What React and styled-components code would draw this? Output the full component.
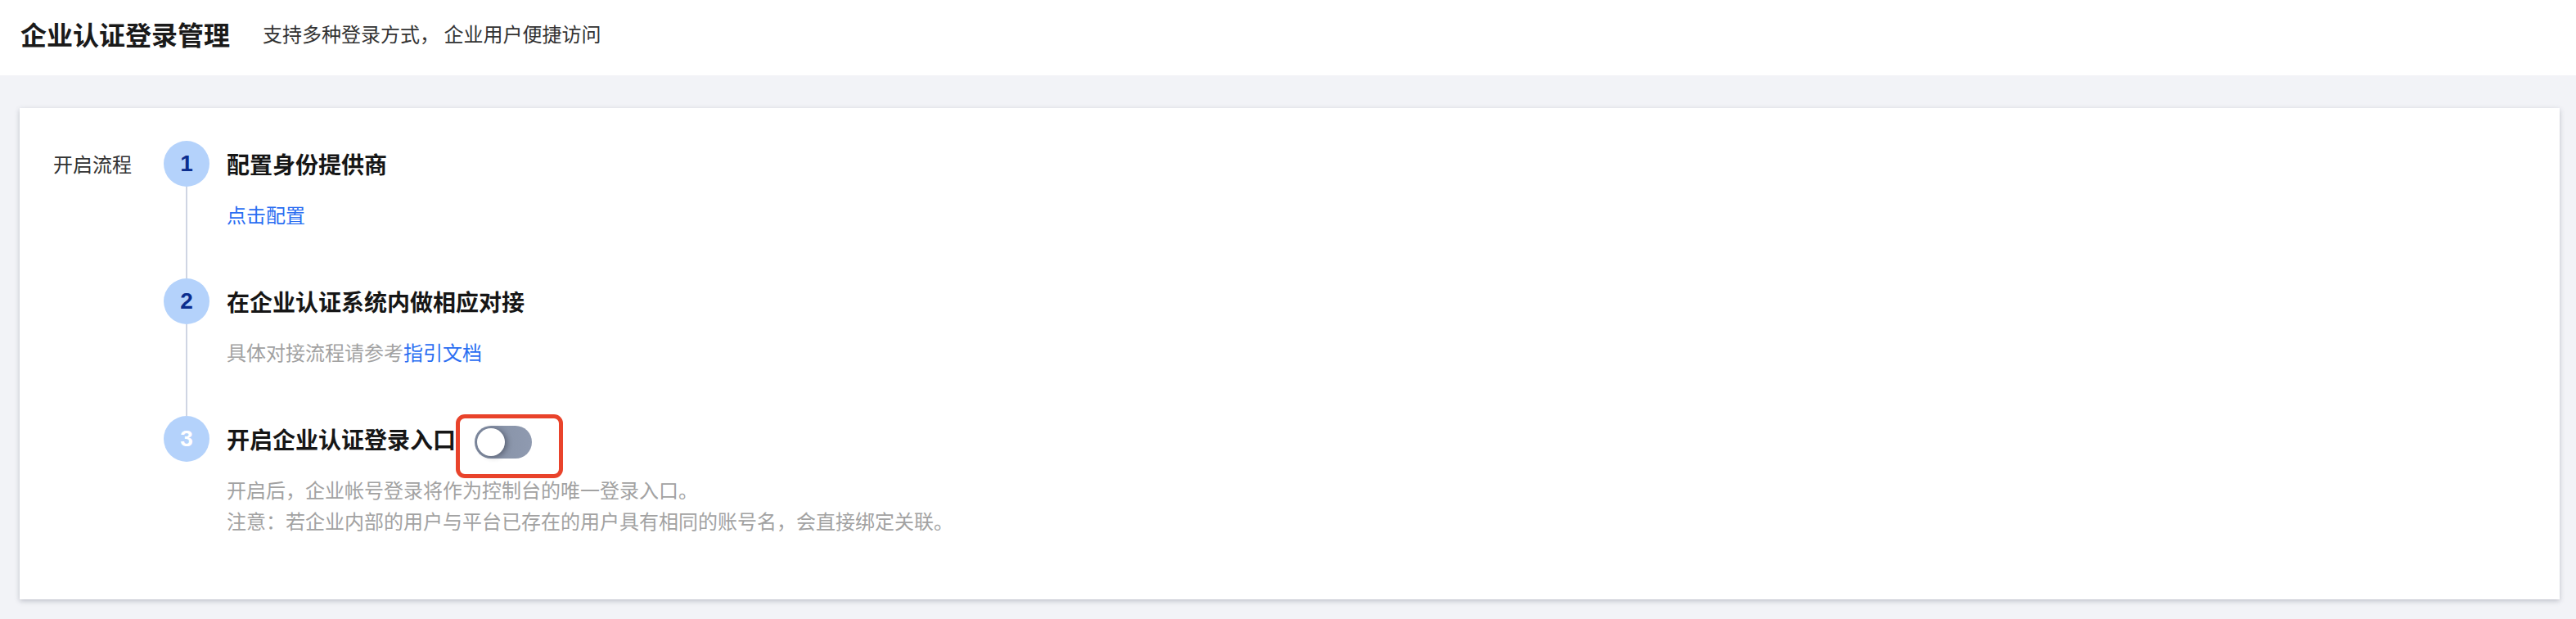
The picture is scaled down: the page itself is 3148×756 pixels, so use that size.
import React from "react";
import styled, { createGlobalStyle } from "styled-components";

const GlobalStyle = createGlobalStyle`
  html, body {
    margin: 0;
    padding: 0;
    background: #f2f3f7;
    min-height: 100vh;
  }
  body {
    font-family: "Noto Sans CJK SC", "Noto Sans", sans-serif;
    color: #333;
  }
  * { box-sizing: border-box; }
`;

const Header = styled.header`
  height: 92px;
  background: #fff;
  display: flex;
  align-items: center;
  padding: 0 25px 10px;
  gap: 40px;
`;

const PageTitle = styled.h1`
  margin: 0;
  font-size: 32px;
  font-weight: 700;
  color: #1a1a1a;
  line-height: 44px;
`;

const PageSubtitle = styled.span`
  font-size: 24px;
  color: #333;
  line-height: 40px;
`;

const Main = styled.main`
  padding: 40px 20px 26px 24px;
`;

const Card = styled.section`
  background: #fff;
  box-shadow: 0 2px 6px rgba(54, 58, 80, 0.28);
  padding: 40px 40px 77px 41px;
  display: flex;
`;

const FieldLabel = styled.div`
  width: 135px;
  flex: none;
  font-size: 24px;
  line-height: 56px;
  color: #333;
`;

const Steps = styled.ol`
  list-style: none;
  margin: 0;
  padding: 0;
  flex: 1;
  display: flex;
  flex-direction: column;
`;

const Step = styled.li`
  display: flex;
  gap: 21px;
`;

const Rail = styled.div`
  width: 56px;
  flex: none;
  display: flex;
  flex-direction: column;
  align-items: center;
`;

const StepNumber = styled.div`
  width: 56px;
  height: 56px;
  border-radius: 50%;
  background: #b4d2fb;
  color: ${(p) => (p.$muted ? "#fff" : "#0b2d8e")};
  font-family: "Liberation Sans", Arial, sans-serif;
  font-weight: 700;
  font-size: 28px;
  display: flex;
  align-items: center;
  justify-content: center;
  flex: none;
`;

const RailLine = styled.div`
  flex: 1;
  width: 2px;
  background: #cfd5e3;
`;

const StepBody = styled.div`
  padding-bottom: ${(p) => (p.$last ? "0" : "59px")};
  display: flex;
  flex-direction: column;
`;

const StepTitleRow = styled.div`
  display: flex;
  align-items: center;
  height: 56px;
`;

const StepTitle = styled.h3`
  margin: 0;
  font-size: 28px;
  font-weight: 700;
  color: #161616;
  line-height: 56px;
`;

const StepDesc = styled.div`
  margin-top: 15px;
  font-size: 24px;
  line-height: 38px;
  color: #a2a2a2;
`;

const Link = styled.a`
  color: #2a6ef2;
  text-decoration: none;
  cursor: pointer;
`;

const SwitchWrap = styled.span`
  position: relative;
  margin-left: 23px;
  margin-top: 7px;
  display: inline-flex;

  &::after {
    content: "";
    position: absolute;
    left: -23px;
    top: -14px;
    width: 121px;
    height: 68px;
    border: 5px solid #e9432b;
    border-radius: 11px;
    pointer-events: none;
  }
`;

const SwitchTrack = styled.button`
  width: 70px;
  height: 40px;
  border-radius: 20px;
  border: none;
  margin: 0;
  padding: 0 3px;
  background: linear-gradient(90deg, #7d889d 0%, #8a95aa 55%, #8f9ab0 100%);
  display: flex;
  align-items: center;
  justify-content: ${(p) => (p.$on ? "flex-end" : "flex-start")};
  cursor: pointer;
`;

const SwitchKnob = styled.span`
  width: 34px;
  height: 34px;
  border-radius: 50%;
  background: #fff;
  box-shadow: 3px 1px 6px rgba(40, 45, 60, 0.45);
`;

export default function App() {
  return (
    <>
      <GlobalStyle />
      <Header>
        <PageTitle>企业认证登录管理</PageTitle>
        <PageSubtitle>支持多种登录方式， 企业用户便捷访问</PageSubtitle>
      </Header>
      <Main>
        <Card>
          <FieldLabel>开启流程</FieldLabel>
          <Steps>
            <Step>
              <Rail>
                <StepNumber>1</StepNumber>
                <RailLine />
              </Rail>
              <StepBody>
                <StepTitle>配置身份提供商</StepTitle>
                <StepDesc>
                  <Link>点击配置</Link>
                </StepDesc>
              </StepBody>
            </Step>
            <Step>
              <Rail>
                <StepNumber>2</StepNumber>
                <RailLine />
              </Rail>
              <StepBody>
                <StepTitle>在企业认证系统内做相应对接</StepTitle>
                <StepDesc>
                  具体对接流程请参考<Link>指引文档</Link>
                </StepDesc>
              </StepBody>
            </Step>
            <Step>
              <Rail>
                <StepNumber $muted>3</StepNumber>
              </Rail>
              <StepBody $last>
                <StepTitleRow>
                  <StepTitle>开启企业认证登录入口</StepTitle>
                  <SwitchWrap>
                    <SwitchTrack $on={false} aria-label="开启企业认证登录入口">
                      <SwitchKnob />
                    </SwitchTrack>
                  </SwitchWrap>
                </StepTitleRow>
                <StepDesc>
                  开启后，企业帐号登录将作为控制台的唯一登录入口。
                  <br />
                  注意：若企业内部的用户与平台已存在的用户具有相同的账号名，会直接绑定关联。
                </StepDesc>
              </StepBody>
            </Step>
          </Steps>
        </Card>
      </Main>
    </>
  );
}
